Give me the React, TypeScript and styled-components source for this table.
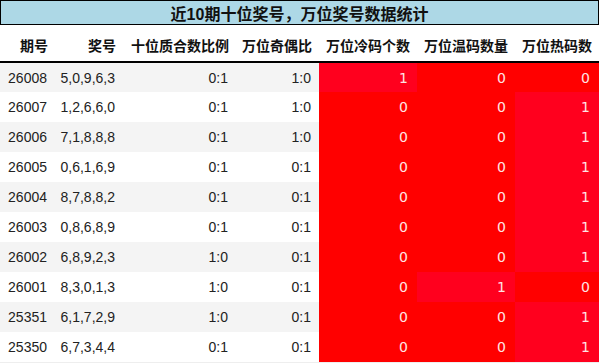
import React from 'react';
import styled, { createGlobalStyle } from 'styled-components';

const GlobalStyle = createGlobalStyle`
  body {
    margin: 0;
    background: #fff;
    font-family: "Liberation Sans", "Noto Sans CJK SC", sans-serif;
  }
`;

const Wrapper = styled.div`
  width: 599px;
`;

const Title = styled.div`
  height: 25px;
  box-sizing: border-box;
  border: 1px solid #000;
  background-color: #add8e6;
  display: flex;
  align-items: center;
  justify-content: center;
  font-size: 16px;
  font-weight: bold;
  color: #111;
`;

const Table = styled.table`
  width: 599px;
  table-layout: fixed;
  border-collapse: collapse;
  font-size: 14px;
  border-bottom: 1px solid #eee;
`;

const HeadRow = styled.tr`
  height: 37px;
  border-bottom: 2px solid #000;
`;

const HeadCell = styled.th`
  padding: 3px 7px 0 0;
  text-align: right;
  font-weight: bold;
  color: #111;
  white-space: nowrap;
`;

const Row = styled.tr<{ $odd: boolean }>`
  height: 30px;
  background-color: ${(p) => (p.$odd ? '#f4f4f4' : '#fff')};
`;

const Cell = styled.td`
  padding: 0 8px 0 0;
  text-align: right;
  color: #222;
  white-space: nowrap;
`;

const HeatCell = styled.td<{ $hot: boolean }>`
  padding: 0 9px 0 0;
  text-align: right;
  background-color: ${(p) => (p.$hot ? '#ff001e' : '#ff0000')};
  color: #ffe4e4;
  font-family: "DejaVu Sans", sans-serif;
`;

const widths = [55, 68, 113, 83, 98, 98, 84];
const headers = ['期号', '奖号', '十位质合数比例', '万位奇偶比', '万位冷码个数', '万位温码数量', '万位热码数'];

type Draw = [string, string, string, string, number, number, number];

const rows: Draw[] = [
  ['26008', '5,0,9,6,3', '0:1', '1:0', 1, 0, 0],
  ['26007', '1,2,6,6,0', '0:1', '1:0', 0, 0, 1],
  ['26006', '7,1,8,8,8', '0:1', '1:0', 0, 0, 1],
  ['26005', '0,6,1,6,9', '0:1', '0:1', 0, 0, 1],
  ['26004', '8,7,8,8,2', '0:1', '0:1', 0, 0, 1],
  ['26003', '0,8,6,8,9', '0:1', '0:1', 0, 0, 1],
  ['26002', '6,8,9,2,3', '1:0', '0:1', 0, 0, 1],
  ['26001', '8,3,0,1,3', '1:0', '0:1', 0, 1, 0],
  ['25351', '6,1,7,2,9', '1:0', '0:1', 0, 0, 1],
  ['25350', '6,7,3,4,4', '0:1', '0:1', 0, 0, 1],
];

function App() {
  return (
    <Wrapper>
      <GlobalStyle />
      <Title>近10期十位奖号，万位奖号数据统计</Title>
      <Table>
        <colgroup>
          {widths.map((w, i) => (
            <col key={i} style={{ width: w }} />
          ))}
        </colgroup>
        <thead>
          <HeadRow>
            {headers.map((h) => (
              <HeadCell key={h}>{h}</HeadCell>
            ))}
          </HeadRow>
        </thead>
        <tbody>
          {rows.map((r, i) => (
            <Row key={r[0]} $odd={i % 2 === 0}>
              <Cell>{r[0]}</Cell>
              <Cell>{r[1]}</Cell>
              <Cell>{r[2]}</Cell>
              <Cell>{r[3]}</Cell>
              <HeatCell $hot={r[4] > 0}>{r[4]}</HeatCell>
              <HeatCell $hot={r[5] > 0}>{r[5]}</HeatCell>
              <HeatCell $hot={r[6] > 0}>{r[6]}</HeatCell>
            </Row>
          ))}
        </tbody>
      </Table>
    </Wrapper>
  );
}

export default App;
